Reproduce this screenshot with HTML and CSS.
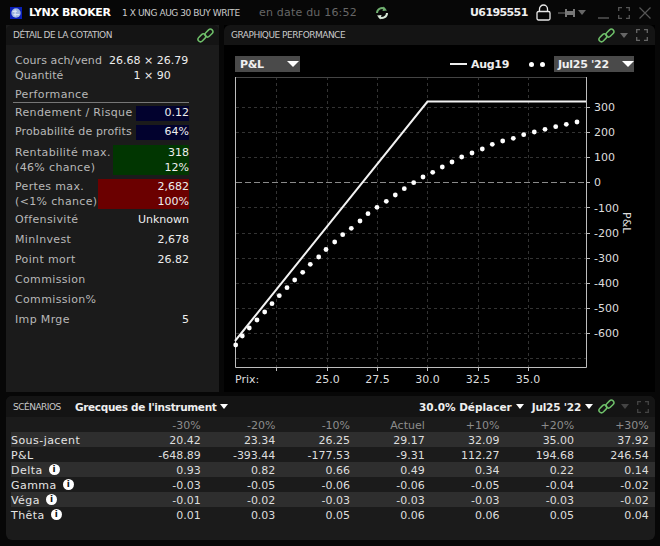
FILE: index.html
```html
<!DOCTYPE html>
<html lang="fr">
<head>
<meta charset="utf-8">
<title>Lynx Broker</title>
<link rel="stylesheet" href="styles.css">
</head>
<body>
<div class="window">
  <header class="titlebar">
    <svg class="logo" width="14" height="14" viewBox="0 0 14 14"><rect width="14" height="14" fill="#0a1fb8"/><circle cx="7" cy="7" r="5.5" fill="#9db4e0"/><path d="M3 5h5M4 9h7M6 3v8" stroke="#d8e2f4" stroke-width="1.4" fill="none"/></svg>
    <span class="brand">LYNX BROKER</span>
    <span class="order">1 X UNG AUG 30 BUY WRITE</span>
    <span class="asof">en date du 16:52</span>
    <svg class="refresh" width="14" height="14" viewBox="0 0 14 14" fill="none" stroke-width="2"><path d="M2 7a5 5 0 0 1 8-4" stroke="#6fae6f"/><path d="M12 7a5 5 0 0 1-8 4" stroke="#d7e6d7"/><path d="M8.500 0.500l3.500 4-4.500 0.500z" fill="#6fae6f"/><path d="M5.500 13.500l-3.500-4 4.500-0.500z" fill="#d7e6d7"/></svg>
    <span class="account">U6195551</span>
    <svg class="lock" width="15" height="17" viewBox="0 0 15 17" fill="none" stroke="#e8e8e8" stroke-width="1.300"><rect x="1" y="7.500" width="13" height="8.500" rx="1.500"/><path d="M3.500 7.500V5a4 4 0 0 1 8 0v2.500"/></svg>
    <svg class="pin" width="19" height="10" viewBox="0 0 19 10"><path d="M0 5h7" stroke="#777" stroke-width="1"/><path d="M7 1h2v2h6V1h2v8h-2V7H9v2H7z" fill="#777"/></svg>
    <span class="caret small-caret"></span>
    <svg class="winbtn minimize" width="11" height="12" viewBox="0 0 11 12"><path d="M0 11h11" stroke="#555" stroke-width="1.500"/></svg>
    <svg class="winbtn" width="12" height="12" viewBox="0 0 12 12" fill="none" stroke="#555" stroke-width="1.300"><path d="M0.700 4V0.700H4M8 0.700h3.300V4M11.300 8v3.300H8M4 11.300H0.700V8"/></svg>
    <svg class="winbtn" width="12" height="12" viewBox="0 0 12 12" fill="none" stroke="#555" stroke-width="1.200"><path d="M0.500 0.500l11 11M11.500 0.500l-11 11"/></svg>
  </header>

  <div class="main">
    <section class="panel quote">
      <div class="panel-head">
        <h2>DÉTAIL DE LA COTATION</h2>
        <svg class="link" width="17" height="17" viewBox="0 0 17 17" fill="none" stroke="#6fc06a" stroke-width="1.500"><rect x="0.600" y="8.300" width="9" height="5" rx="2.500" transform="rotate(-45 5 11)"/><rect x="7.400" y="3.500" width="9" height="5" rx="2.500" transform="rotate(-45 12 6)"/></svg>
      </div>
      <div class="quote-body">
        <div class="pair first"><span>Cours ach/vend</span><b class="val-center">26.68 × 26.79</b></div>
        <div class="pair second"><span>Quantité</span><b class="val-center qty">1 × 90</b></div>
        <div class="section-title">Performance</div>
        <div class="metric"><span>Rendement / Risque</span><b class="cell navy cell-s">0.12</b></div>
        <div class="metric gap-s tight"><span>Probabilité de profits</span><b class="cell navy cell-s">64%</b></div>
        <div class="metric two"><span>Rentabilité max.<br>(46% chance)</span><b class="cell green cell-m">318<br>12%</b></div>
        <div class="metric two loss"><span>Pertes max.<br>(&lt;1% chance)</span><b class="cell red cell-l">2,682<br>100%</b></div>
        <div class="plain offset"><span>Offensivité</span><b>Unknown</b></div>
        <div class="plain"><span>MinInvest</span><b>2,678</b></div>
        <div class="plain"><span>Point mort</span><b>26.82</b></div>
        <div class="plain"><span>Commission</span><b></b></div>
        <div class="plain"><span>Commission%</span><b></b></div>
        <div class="plain"><span>Imp Mrge</span><b>5</b></div>
      </div>
    </section>

    <section class="panel performance">
      <div class="panel-head">
        <h2>GRAPHIQUE PERFORMANCE</h2>
        <div class="head-tools">
          <svg class="link" width="17" height="17" viewBox="0 0 17 17" fill="none" stroke="#6fc06a" stroke-width="1.500"><rect x="0.600" y="8.300" width="9" height="5" rx="2.500" transform="rotate(-45 5 11)"/><rect x="7.400" y="3.500" width="9" height="5" rx="2.500" transform="rotate(-45 12 6)"/></svg>
          <span class="caret small-caret"></span>
          <svg class="expand" width="12" height="12" viewBox="0 0 12 12" fill="none" stroke="#666" stroke-width="1.300"><path d="M0.700 4V0.700H4M8 0.700h3.300V4M11.300 8v3.300H8M4 11.300H0.700V8"/></svg>
        </div>
      </div>
      <div class="chart-area">
        <div class="chart-tools">
          <div class="select pnl"><span>P&amp;L</span><i class="caret"></i></div>
          <div class="legend">
            <span class="legend-line"></span><span class="legend-label">Aug19</span>
            <span class="legend-dots"><i></i><i></i></span>
          </div>
          <div class="select date"><span>Jul25 '22</span><i class="caret"></i></div>
        </div>
        <svg class="chart" width="431" height="315" viewBox="224 77 431 315">
          <g class="grid">
            <path d="M276.500 77V367M327.500 77V367M377.500 77V367M427.500 77V367M478.500 77V367M528.500 77V367"/>
            <path d="M236 107.500H586M236 132.500H586M236 157.500H586M236 207.500H586M236 233.500H586M236 258.500H586M236 283.500H586M236 308.500H586M236 333.500H586M236 358.500H586"/>
          </g>
          <path class="zero" d="M236 182.500H586"/>
          <path class="frame-top" d="M235.500 77.500H586"/>
          <path class="frame" d="M235.500 77V367.500H586.500V77"/>
          <path class="ticks" d="M586 107.500h4M586 132.500h4M586 157.500h4M586 182.500h4M586 207.500h4M586 233.500h4M586 258.500h4M586 283.500h4M586 308.500h4M586 333.500h4M276.500 367v4M327.500 367v4M377.500 367v4M427.500 367v4M478.500 367v4M528.500 367v4"/>
          <path class="payoff" d="M235 341L427.500 101.500H586"/>
          <g class="dots">
            <circle cx="235.700" cy="345" r="2.400"/><circle cx="242.300" cy="336" r="2.400"/><circle cx="249.300" cy="328" r="2.400"/><circle cx="257" cy="320" r="2.400"/><circle cx="264.700" cy="312" r="2.400"/><circle cx="272" cy="303.700" r="2.400"/><circle cx="279.300" cy="295.700" r="2.400"/><circle cx="287" cy="287.700" r="2.400"/><circle cx="294.700" cy="280" r="2.400"/><circle cx="302.700" cy="272.300" r="2.400"/><circle cx="310.300" cy="264.300" r="2.400"/><circle cx="318.700" cy="257" r="2.400"/><circle cx="326" cy="249.500" r="2.400"/><circle cx="334.700" cy="242" r="2.400"/><circle cx="342.700" cy="234.700" r="2.400"/><circle cx="351.300" cy="228.300" r="2.400"/><circle cx="360" cy="221" r="2.400"/><circle cx="368" cy="213.700" r="2.400"/><circle cx="377" cy="207.300" r="2.400"/><circle cx="386.300" cy="201.300" r="2.400"/><circle cx="395.300" cy="195" r="2.400"/><circle cx="404.300" cy="188.700" r="2.400"/><circle cx="413.700" cy="182.700" r="2.400"/><circle cx="423" cy="177" r="2.400"/><circle cx="432.700" cy="172.300" r="2.400"/><circle cx="442.300" cy="167" r="2.400"/><circle cx="452" cy="162" r="2.400"/><circle cx="461.700" cy="157" r="2.400"/><circle cx="472" cy="153" r="2.400"/><circle cx="482.300" cy="149" r="2.400"/><circle cx="492.300" cy="144.300" r="2.400"/><circle cx="502.700" cy="141" r="2.400"/><circle cx="513.300" cy="138.300" r="2.400"/><circle cx="523.700" cy="134.700" r="2.400"/><circle cx="534.300" cy="132" r="2.400"/><circle cx="545" cy="129.300" r="2.400"/><circle cx="555.700" cy="126.700" r="2.400"/><circle cx="566.300" cy="124.300" r="2.400"/><circle cx="577" cy="122" r="2.400"/>
          </g>
          <g class="labels">
            <text x="594" y="111">300</text><text x="594" y="136">200</text><text x="594" y="161">100</text><text x="594" y="186">0</text><text x="594" y="212">-100</text><text x="594" y="237">-200</text><text x="594" y="262">-300</text><text x="594" y="287">-400</text><text x="594" y="312">-500</text><text x="594" y="337">-600</text>
            <text x="235" y="383">Prix:</text>
            <text class="mid" x="327.500" y="383">25.0</text><text class="mid" x="377.500" y="383">27.5</text><text class="mid" x="427.500" y="383">30.0</text><text class="mid" x="478" y="383">32.5</text><text class="mid" x="528" y="383">35.0</text>
            <text transform="translate(623 212) rotate(90)">P&amp;L</text>
          </g>
        </svg>
      </div>
    </section>
  </div>

  <section class="panel scenarios">
    <div class="scen-head">
      <h2>SCÉNARIOS</h2>
      <span class="drop first-drop">Grecques de l'instrument<i class="caret"></i></span>
      <span class="drop move-drop">30.0% Déplacer<i class="caret"></i></span>
      <span class="drop date-drop">Jul25 '22<i class="caret"></i></span>
      <svg class="link" width="17" height="17" viewBox="0 0 17 17" fill="none" stroke="#6fc06a" stroke-width="1.500"><rect x="0.600" y="8.300" width="9" height="5" rx="2.500" transform="rotate(-45 5 11)"/><rect x="7.400" y="3.500" width="9" height="5" rx="2.500" transform="rotate(-45 12 6)"/></svg>
      <span class="caret small-caret dim"></span>
      <svg class="expand" width="12" height="12" viewBox="0 0 12 12" fill="none" stroke="#444" stroke-width="1.300"><path d="M0.700 4V0.700H4M8 0.700h3.300V4M11.300 8v3.300H8M4 11.300H0.700V8"/></svg>
    </div>
    <div class="table">
      <div class="row head"><span></span><span>-30%</span><span>-20%</span><span>-10%</span><span>Actuel</span><span>+10%</span><span>+20%</span><span>+30%</span></div>
      <div class="row"><span>Sous-jacent</span><span>20.42</span><span>23.34</span><span>26.25</span><span>29.17</span><span>32.09</span><span>35.00</span><span>37.92</span></div>
      <div class="row"><span>P&amp;L</span><span>-648.89</span><span>-393.44</span><span>-177.53</span><span>-9.31</span><span>112.27</span><span>194.68</span><span>246.54</span></div>
      <div class="row"><span>Delta<i class="info">i</i></span><span>0.93</span><span>0.82</span><span>0.66</span><span>0.49</span><span>0.34</span><span>0.22</span><span>0.14</span></div>
      <div class="row"><span>Gamma<i class="info">i</i></span><span>-0.03</span><span>-0.05</span><span>-0.06</span><span>-0.06</span><span>-0.05</span><span>-0.04</span><span>-0.02</span></div>
      <div class="row"><span>Véga<i class="info">i</i></span><span>-0.01</span><span>-0.02</span><span>-0.03</span><span>-0.03</span><span>-0.03</span><span>-0.03</span><span>-0.02</span></div>
      <div class="row"><span>Thêta<i class="info">i</i></span><span>0.01</span><span>0.03</span><span>0.05</span><span>0.06</span><span>0.06</span><span>0.05</span><span>0.04</span></div>
    </div>
  </section>
</div>
</body>
</html>
```

FILE: styles.css
```css
* { box-sizing: border-box; }
html, body { margin: 0; padding: 0; }
body {
  width: 660px;
  height: 546px;
  overflow: hidden;
  background: #070707;
  color: #ddd;
  font-family: "DejaVu Sans", Verdana, sans-serif;
  font-size: 11px;
}
.window {
  display: flex;
  flex-direction: column;
  width: 660px;
  height: 546px;
  padding: 0 5px 6px 6px;
}
h2 { margin: 0; font-weight: normal; font-size: 9px; color: #c9c9c9; letter-spacing: -0.5px; }
b { font-weight: normal; }
i { font-style: normal; }

/* Title bar */
.titlebar { display: flex; align-items: center; height: 25px; flex: none; margin-right: -5px; }
.titlebar > * { flex: none; }
.logo { margin-left: 4px; width: 12px; height: 12px; }
.brand { margin-left: 7px; font-weight: bold; font-size: 11px; color: #fff; width: 93px; white-space: nowrap; letter-spacing: -0.35px; }
.order { font-size: 9px; color: #ccc; width: 137px; white-space: nowrap; letter-spacing: -0.42px; }
.asof { font-size: 11px; color: #666; width: 116px; white-space: nowrap; letter-spacing: 0.2px; }
.account { margin-left: 81px; font-weight: bold; color: #eee; width: 66px; font-size: 11px; white-space: nowrap; letter-spacing: -0.6px; }
.pin { margin-left: 7px; }
.titlebar .small-caret { margin-left: 1px; }
.winbtn { margin-right: 9px; }
.minimize { margin-left: 12px; }

/* Carets */
.caret {
  display: inline-block;
  width: 0;
  height: 0;
  border-left: 6px solid transparent;
  border-right: 6px solid transparent;
  border-top: 6px solid #fff;
}
.small-caret { border-left-width: 4px; border-right-width: 4px; border-top: 5px solid #666; flex: none; }
.small-caret.dim { border-top-color: #444; }

/* Panels */
.main { display: flex; gap: 5px; height: 367px; flex: none; }
.panel { display: flex; flex-direction: column; background: #1b1b1b; }
.panel-head {
  display: flex;
  align-items: center;
  justify-content: space-between;
  height: 20px;
  flex: none;
  background: #141414;
  border-radius: 6px 6px 0 0;
  padding: 0 5px 0 7px;
}
.quote { width: 213px; }
.performance { width: 431px; background: #000; }
.head-tools { display: flex; align-items: center; gap: 5px; padding-right: 2px; }
.head-tools .expand { margin-left: 3px; }
.link { flex: none; }

/* Quote body */
.quote-body { flex: 1; padding: 7px 30px 0 9px; color: #b8b8b8; letter-spacing: 0.35px; }
.quote-body b { color: #eee; letter-spacing: 0; white-space: nowrap; }
.pair { display: flex; height: 15px; align-items: center; white-space: nowrap; letter-spacing: 0.08px; }
.first { height: 16px; }
.val-center { margin-left: 7px; font-size: 11px; }
.qty { margin-left: 70px; }
.second { height: 14px; }
.section-title { margin: 4px 0 0 -2px; width: 176px; padding: 0 0 0 2px; height: 17px; line-height: 18px; border-bottom: 1px solid #777; }
.metric { display: flex; justify-content: space-between; align-items: stretch; margin-top: 3px; height: 15px; line-height: 14px; white-space: nowrap; }
.metric.gap-s { margin-top: 4px; }
.metric.tight { letter-spacing: 0.12px; }
.metric.two { height: 30px; line-height: 15px; margin-top: 5px; }
.metric.loss { margin-top: 4px; }
.cell { text-align: right; }
.cell-s { width: 53px; }
.cell-m { width: 76px; }
.cell-l { width: 91px; }
.navy { background: #02022e; }
.green { background: #013601; }
.red { background: #6b0000; }
.plain { display: flex; justify-content: space-between; height: 20px; line-height: 20px; white-space: nowrap; }
.offset { margin-top: 1px; }

/* Chart */
.chart-area { flex: 1; display: flex; flex-direction: column; background: #000; }
.chart-tools { display: flex; align-items: center; height: 27px; padding: 11px 0 0 11px; flex: none; margin-bottom: 5px; }
.select { display: flex; align-items: center; justify-content: space-between; height: 16px; background: #4a4a4a; color: #f0f0f0; font-weight: bold; padding: 0 0 0 4px; font-size: 11px; letter-spacing: -0.3px; }
.select.pnl { width: 65px; padding-left: 5px; padding-right: 1px; }
.select.date { width: 80px; }
.legend { display: flex; align-items: center; margin-left: 150px; width: 104px; }
.legend-line { width: 17px; height: 2px; background: #eee; }
.legend-label { margin-left: 4px; font-weight: bold; color: #eee; width: 55px; letter-spacing: -0.3px; }
.legend-dots { display: flex; gap: 6px; margin-left: 3px; }
.legend-dots i { width: 5px; height: 5px; border-radius: 50%; background: #fff; }
.chart { display: block; flex: none; }
.grid path { stroke: #333; stroke-width: 1; stroke-dasharray: 3 3; fill: none; }
.zero { stroke: #8a8a8a; stroke-width: 1; stroke-dasharray: 6 3; fill: none; }
.frame-top { stroke: #444; fill: none; }
.frame { stroke: #bdbdbd; fill: none; }
.ticks { stroke: #bdbdbd; fill: none; }
.payoff { stroke: #f2f2f2; stroke-width: 2; fill: none; }
.dots circle { fill: #fff; }
.labels text { fill: #ddd; font-size: 11px; font-family: "DejaVu Sans", Verdana, sans-serif; }
.labels .mid { text-anchor: middle; }

/* Scenarios */
.scenarios { margin-top: 4px; flex: 1; border-radius: 6px; }
.scen-head { display: flex; align-items: center; height: 21px; flex: none; background: #141414; border-radius: 6px 6px 0 0; padding: 0 6px 0 7px; }
.scen-head h2 { width: 62px; flex: none; }
.drop { display: flex; align-items: center; gap: 4px; font-weight: bold; color: #eee; font-size: 10.500px; white-space: nowrap; }
.drop .caret { border-left-width: 4.500px; border-right-width: 4.500px; border-top-width: 5px; }
.first-drop { letter-spacing: -0.35px; }
.move-drop { margin-left: auto; }
.date-drop { margin-left: 8px; letter-spacing: -0.2px; }
.scen-head .link { margin-left: 5px; }
.scen-head .small-caret { margin-left: 6px; }
.scen-head .expand { margin-left: 8px; flex: none; }
.table { padding: 0 0 0 5px; }
.row { display: grid; grid-template-columns: 116px repeat(7, 74.7px); height: 15px; line-height: 17px; color: #ddd; }
.row:nth-child(even) { background: #2e2e2e; }
.row span { text-align: right; padding-right: 1px; white-space: nowrap; }
.row span:first-child { text-align: left; display: flex; align-items: flex-start; gap: 6px; color: #e4e4e4; letter-spacing: 0.45px; }
.head span { color: #8c8c8c; }
.info {
  display: inline-block;
  width: 11px;
  height: 11px;
  margin-top: 2px;
  border-radius: 50%;
  background: #fff;
  color: #111;
  font-size: 9px;
  font-weight: bold;
  line-height: 11px;
  letter-spacing: 0;
  text-align: center;
}
```
